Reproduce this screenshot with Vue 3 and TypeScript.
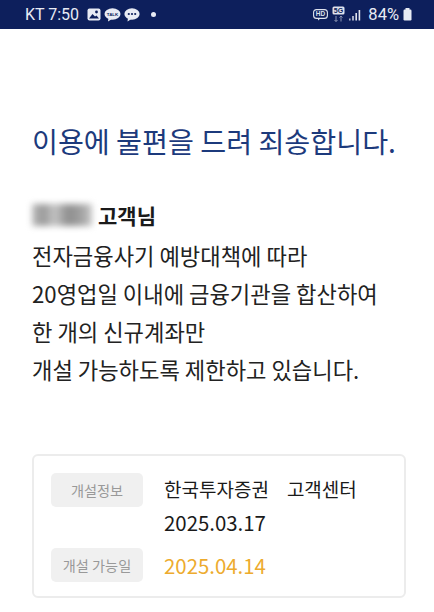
<script setup lang="ts">
const lines: string[] = [
  '전자금융사기 예방대책에 따라',
  '20영업일 이내에 금융기관을 합산하여',
  '한 개의 신규계좌만',
  '개설 가능하도록 제한하고 있습니다.',
]
</script>

<template>
  <div class="page">
    <header class="status">
      <div class="status-left">
        <span class="carrier">KT 7:50</span>
        <svg class="ic" width="14" height="13" viewBox="0 0 14 13">
          <rect x="0.5" y="0.5" width="13" height="12" rx="2" fill="#e8ebf4" />
          <circle cx="9.5" cy="4" r="1.4" fill="#0d1f5c" />
          <path d="M2 10.5 L5.5 6 L8 8.5 L9.5 7.5 L12 10.5 Z" fill="#0d1f5c" />
        </svg>
        <svg class="ic" width="17" height="14" viewBox="0 0 17 14">
          <ellipse cx="8.5" cy="6" rx="8" ry="5.8" fill="#e8ebf4" />
          <path d="M4.5 10 L4 13.5 L8 11 Z" fill="#e8ebf4" />
          <text x="8.5" y="7.8" text-anchor="middle" class="talk">TALK</text>
        </svg>
        <svg class="ic" width="16" height="14" viewBox="0 0 16 14">
          <ellipse cx="8" cy="6" rx="7.6" ry="5.8" fill="#e8ebf4" />
          <path d="M4 10 L3.5 13.5 L7.5 11 Z" fill="#e8ebf4" />
          <circle cx="4.8" cy="6" r="1.1" fill="#0d1f5c" />
          <circle cx="8" cy="6" r="1.1" fill="#0d1f5c" />
          <circle cx="11.2" cy="6" r="1.1" fill="#0d1f5c" />
        </svg>
        <span class="dot"></span>
      </div>
      <div class="status-right">
        <svg width="15" height="13" viewBox="0 0 15 13">
          <rect x="0.6" y="1.6" width="13.8" height="8.8" rx="3" fill="none" stroke="#dfe3ee" stroke-width="1.1" />
          <path d="M5 10.4 L5 12.6 L7.4 10.4" fill="#dfe3ee" />
          <text x="7.5" y="8.2" text-anchor="middle" class="hd">HD</text>
        </svg>
        <svg width="13" height="17" viewBox="0 0 13 17">
          <rect x="0.5" y="0.5" width="12" height="8" rx="1.5" fill="#dfe3ee" />
          <text x="6.5" y="7" text-anchor="middle" class="fiveg">5G</text>
          <path d="M4 10 V15.5 M2.5 14 L4 15.5 L5.5 14 M9 15.5 V10 M7.5 11.5 L9 10 L10.5 11.5" fill="none" stroke="#8d96b5" stroke-width="1" />
        </svg>
        <svg class="signal" width="12" height="12" viewBox="0 0 12 12">
          <rect x="0" y="9.5" width="1.6" height="2" fill="#aab1c9" />
          <rect x="3.2" y="7" width="1.6" height="4.5" fill="#cdd2e0" />
          <rect x="6.4" y="4" width="1.6" height="7.5" fill="#dfe3ee" />
          <rect x="9.6" y="1" width="1.6" height="10.5" fill="#dfe3ee" />
        </svg>
        <span class="pct">84%</span>
        <svg width="9" height="13" viewBox="0 0 9 13">
          <rect x="2.5" y="0" width="4" height="2" fill="#e8ebf4" />
          <rect x="0.5" y="1.5" width="8" height="11" rx="1.2" fill="#e8ebf4" />
        </svg>
      </div>
    </header>

    <main class="content">
      <h1 class="title">이용에 불편을 드려 죄송합니다.</h1>

      <div class="message">
        <p class="name-line">
          <span class="blurred" aria-hidden="true"></span>
          <strong>고객님</strong>
        </p>
        <p v-for="line in lines" :key="line">{{ line }}</p>
      </div>

      <section class="card">
        <div class="row first">
          <span class="label">개설정보</span>
          <div class="value">
            <div class="company">한국투자증권<span class="center">고객센터</span></div>
            <div class="date-line">2025.03.17</div>
          </div>
        </div>
        <div class="row second">
          <span class="label">개설 가능일</span>
          <div class="value date-accent">2025.04.14</div>
        </div>
      </section>
    </main>
  </div>
</template>

<style>
html,
body {
  margin: 0;
  background: #fff;
}
</style>

<style scoped>
.page {
  width: 434px;
  height: 612px;
  overflow: hidden;
  background: #fff;
  font-family: "Noto Sans CJK KR", "Noto Sans", sans-serif;
  color: #1a1a1a;
}
.status {
  height: 29px;
  background: #0d1f5c;
  display: flex;
  align-items: center;
  justify-content: space-between;
  padding: 0 22px 0 25px;
  box-sizing: border-box;
  color: #e8ebf4;
  font-family: Roboto, "Noto Sans", sans-serif;
}
.status-left,
.status-right {
  display: flex;
  align-items: center;
}
.status-left {
  gap: 3px;
}
.carrier {
  font-size: 16px;
  margin-right: 5px;
}
.dot {
  width: 5px;
  height: 5px;
  border-radius: 50%;
  background: #e8ebf4;
  margin-left: 8px;
}
.status-right {
  gap: 4px;
}
.pct {
  font-size: 16.5px;
  margin-left: 3px;
}
.talk {
  font: 700 4.4px "Liberation Sans", sans-serif;
  fill: #0d1f5c;
}
.hd {
  font: 700 6.5px "Liberation Sans", sans-serif;
  fill: #dfe3ee;
}
.fiveg {
  font: 700 7px "Liberation Sans", sans-serif;
  fill: #0d1f5c;
}
.content {
  padding: 91px 28px 0 32px;
}
.title {
  margin: 0;
  font-size: 28.2px;
  line-height: 42px;
  font-weight: 400;
  color: #1c3a7c;
  white-space: nowrap;
}
.message {
  margin-top: 32px;
  font-size: 22.2px;
  line-height: 38px;
  color: #222;
}
.message p {
  margin: 0;
  white-space: nowrap;
}
.message .name-line {
  display: flex;
  align-items: center;
  gap: 6px;
  height: 42px;
}
.name-line strong {
  font-weight: 700;
  font-size: 21px;
  color: #1a1a1a;
}
.blurred {
  width: 60px;
  height: 22px;
  background: linear-gradient(90deg, #bdbdbd 0, #999 18%, #c4c4c4 38%, #8f8f8f 60%, #9c9c9c 78%, #c6c6c6 100%);
  filter: blur(3px);
}
.card {
  margin-top: 66px;
  width: 374px;
  height: 144px;
  box-sizing: border-box;
  border: 2px solid #ececec;
  border-radius: 6px;
  padding: 17px 0 0 17px;
}
.row {
  display: flex;
  align-items: flex-start;
  gap: 21px;
}
.second {
  margin-top: 9px;
}
.label {
  width: 92px;
  height: 34px;
  flex: none;
  border-radius: 5px;
  background: #f0f0f0;
  color: #999;
  font-size: 14.2px;
  display: flex;
  align-items: center;
  justify-content: center;
  white-space: nowrap;
}
.value {
  font-size: 20.4px;
  line-height: 33px;
  white-space: nowrap;
}
.company {
  font-size: 19px;
  margin-top: -1px;
}
.date-line {
  margin-top: 1px;
}
.center {
  margin-left: 18px;
}
.date-accent {
  color: #edab2e;
  line-height: 34px;
}
</style>
